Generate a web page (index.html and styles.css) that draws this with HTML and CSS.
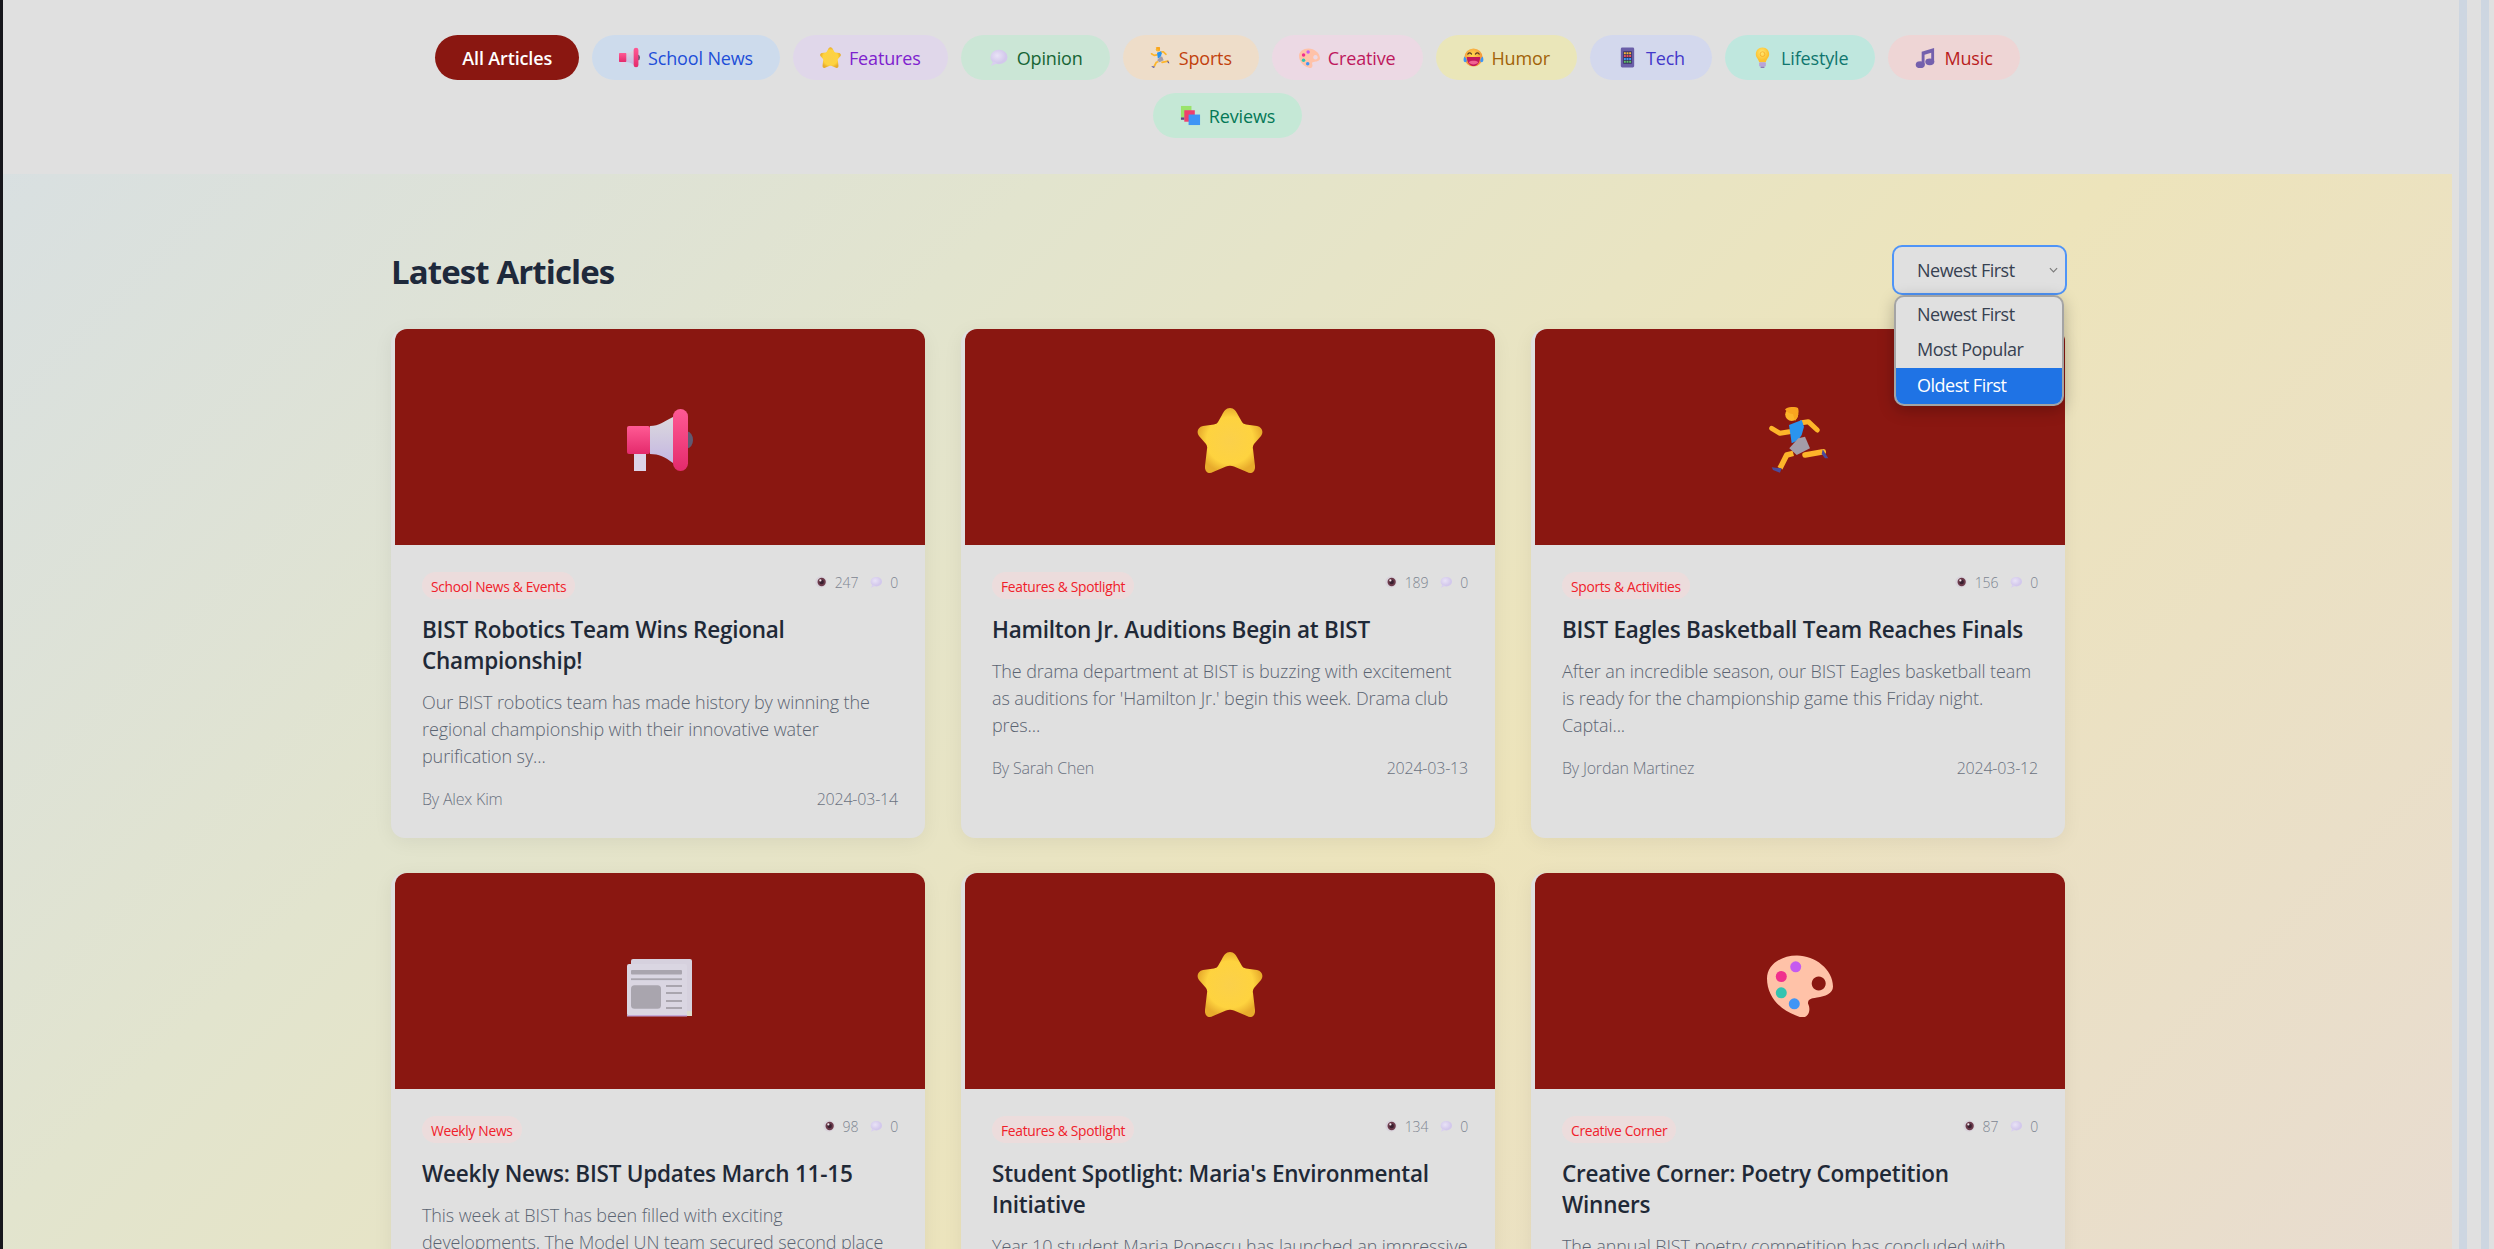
FILE: index.html
```html
<!DOCTYPE html>
<html lang="en">
<head>
    <meta charset="UTF-8">
    <meta name="viewport" content="width=device-width, initial-scale=1.0">
    <title>BIST Articles</title>
    <link rel="stylesheet" href="styles.css">
</head>
<body>
    <svg class="defs" width="0" height="0" aria-hidden="true">
        <defs>
            <linearGradient id="g-pink" x1="0" y1="0" x2="0" y2="1"><stop offset="0" stop-color="#ff5a94"/><stop offset="1" stop-color="#e42a6c"/></linearGradient>
            <linearGradient id="g-horn" x1="0" y1="0" x2="0" y2="1"><stop offset="0" stop-color="#dbd9dd"/><stop offset="1" stop-color="#c4b6e2"/></linearGradient>
            <radialGradient id="g-star"><stop offset="0" stop-color="#fbd04a"/><stop offset=".72" stop-color="#fed33f"/><stop offset="1" stop-color="#e8ac2c"/></radialGradient>
            <radialGradient id="g-bubble" cx=".4" cy=".4"><stop offset="0" stop-color="#e9e3f6"/><stop offset="1" stop-color="#d3c8ec"/></radialGradient>
            <radialGradient id="g-face" cx=".45" cy=".35"><stop offset="0" stop-color="#ffd84f"/><stop offset="1" stop-color="#f59a3a"/></radialGradient>
            <radialGradient id="g-bulb" cx=".45" cy=".35"><stop offset="0" stop-color="#ffe873"/><stop offset="1" stop-color="#fdc12f"/></radialGradient>

            <symbol id="e-mega" viewBox="0 0 66 66">
                <rect x="7" y="45" width="12" height="19" fill="#dcd3e8"/>
                <ellipse cx="60" cy="33" rx="6" ry="8.5" fill="#5f5a72"/>
                <path d="M23 19 C32 19 38 14 46 10 V56 C38 50 32 47 23 47 Z" fill="url(#g-horn)"/>
                <rect x="0" y="19" width="23" height="28" rx="2" fill="url(#g-pink)"/>
                <rect x="46" y="2" width="15" height="62" rx="7.5" fill="url(#g-pink)"/>
            </symbol>
            <symbol id="e-star" viewBox="0 0 66 66">
                <path d="M33 1 C37 1 39 4 41 8 L45 15 C46 16.5 47 17 49 17.5 L60 19 C65 20 67 25 64 29 L57 37 C56 38.5 55.5 40 56 42 L58 59 C58.5 65 54 67.5 50 65 L37 59.5 C34.5 58.5 31.5 58.5 29 59.5 L16 65 C12 67.5 7.5 65 8 59 L10 42 C10.5 40 10 38.5 9 37 L2 29 C-1 25 1 20 6 19 L17 17.5 C19 17 20 16.5 21 15 L25 8 C27 4 29 1 33 1 Z" fill="url(#g-star)"/>
            </symbol>
            <symbol id="e-run" viewBox="0 0 66 66">
                <path d="M22.3 24.7 L13 26.3 L4.7 21.3" fill="none" stroke="#fdb52a" stroke-width="5" stroke-linecap="round" stroke-linejoin="round"/>
                <path d="M34.7 15.7 L41.3 14.7 L50.3 23" fill="none" stroke="#fdb52a" stroke-width="5" stroke-linecap="round" stroke-linejoin="round"/>
                <path d="M26.3 46.3 L19.7 48 L13 61.3" fill="none" stroke="#fdb52a" stroke-width="5.5" stroke-linejoin="round"/>
                <path d="M38 48 L56.3 44.7" fill="none" stroke="#fdb52a" stroke-width="5.5" stroke-linecap="round"/>
                <path d="M22 18 L34.7 13 L37 19.7 L34.7 28 L31.3 33 L24.7 36.3 Z" fill="#2a94ee"/>
                <path d="M22.3 41.3 L31.3 31.3 L38 29.7 L43 41.3 L29.7 48 Z" fill="#a39ca8"/>
                <circle cx="24.7" cy="7.5" r="6.5" fill="#fdb52a"/>
                <path d="M18 2.5 C20 0 27 -1 31 1 C32.5 5 31 11 28 14 L26 7 C23 7 20 5 18 2.5 Z" fill="#f9a51f"/>
                <path d="M55.7 42.3 L61.3 51.3 L58 51.3 L54.7 47 Z" fill="#4b4a9c"/>
                <path d="M4.7 60.3 L14.7 61.3 L13 65.7 L6 63 Z" fill="#4b4a9c"/>
            </symbol>
            <symbol id="e-bubble" viewBox="0 0 44 44">
                <ellipse cx="23" cy="21" rx="18" ry="15" fill="url(#g-bubble)"/>
                <path d="M11 30 L6 40 L20 34 Z" fill="#d9cfef"/>
            </symbol>
            <symbol id="e-palette" viewBox="0 0 66 66">
                <g transform="translate(0 4.5)">
                    <path fill-rule="evenodd" d="M30 0 C48 0 66 14 66 31 C66 38 58 41 50 42 C43 43 41 44 41 48 C43 52 43 57 40 60 C37 63 33 62 29 60 C12 54 0 40 0 23 C0 10 13 0 30 0 Z M51.7 21 a7 7 0 1 0 .01 0 Z" fill="#ffc2a8"/>
                    <circle cx="28.7" cy="11.3" r="5.5" fill="#c55bf0"/>
                    <circle cx="14.3" cy="21" r="5.5" fill="#f0308d"/>
                    <circle cx="14.3" cy="37.3" r="5.5" fill="#33c4b0"/>
                    <circle cx="27.3" cy="48.3" r="5.5" fill="#3f95f5"/>
                </g>
            </symbol>
            <symbol id="e-laugh" viewBox="0 0 44 44">
                <circle cx="22" cy="22" r="19" fill="url(#g-face)"/>
                <path d="M10 15 q4 -5 8 0 M26 15 q4 -5 8 0" fill="none" stroke="#5a3a20" stroke-width="2.5" stroke-linecap="round"/>
                <path d="M8 21 H36 C36 33 29 40 22 40 C15 40 8 33 8 21 Z" fill="#c2185b"/>
                <path d="M12 32 C17 28 27 28 32 32 C29 38 15 38 12 32 Z" fill="#f06292"/>
                <path d="M3 20 C0 26 1 32 5 32 C9 32 9 26 3 20 Z M41 20 C44 26 43 32 39 32 C35 32 35 26 41 20 Z" fill="#3f95f5"/>
            </symbol>
            <symbol id="e-phone" viewBox="0 0 44 44">
                <rect x="8" y="1" width="28" height="42" rx="3" fill="#6a5ea8"/>
                <rect x="13" y="9" width="18" height="26" fill="#38305c"/>
                <path d="M14.5 11 h4v4h-4z M20 11 h4v4h-4z M25.5 11 h4v4h-4z" fill="#f5b83d"/>
                <path d="M14.5 17 h4v4h-4z M20 17 h4v4h-4z M25.5 17 h4v4h-4z" fill="#e8505b"/>
                <path d="M14.5 23 h4v4h-4z M20 23 h4v4h-4z M25.5 23 h4v4h-4z" fill="#3f95f5"/>
                <path d="M14.5 29 h4v4h-4z M20 29 h4v4h-4z M25.5 29 h4v4h-4z" fill="#5dc26a"/>
            </symbol>
            <symbol id="e-bulb" viewBox="0 0 44 44">
                <path d="M22 1 C31 1 36 8 36 15 C36 22 30 25 29 32 H15 C14 25 8 22 8 15 C8 8 13 1 22 1 Z" fill="url(#g-bulb)"/>
                <circle cx="22" cy="15" r="5" fill="none" stroke="#f5a623" stroke-width="1.5"/>
                <rect x="15" y="32" width="14" height="9" rx="2" fill="#b9a3d8"/>
                <rect x="18" y="41" width="8" height="3" fill="#8f78b8"/>
            </symbol>
            <symbol id="e-music" viewBox="0 0 44 44">
                <path d="M14 10 L40 2 V32 H34 V12 L20 16 V38 H14 Z" fill="#7460ad"/>
                <ellipse cx="11" cy="37" rx="9.5" ry="7" fill="#7460ad"/>
                <ellipse cx="31" cy="31" rx="9.5" ry="7" fill="#7460ad"/>
            </symbol>
            <symbol id="e-books" viewBox="0 0 44 44">
                <rect x="2" y="2" width="22" height="24" fill="#9ae36a"/>
                <rect x="9" y="11" width="22" height="24" fill="#ef3f6e"/>
                <rect x="18" y="20" width="24" height="22" fill="#3f95f5"/>
                <rect x="2" y="26" width="7" height="5" fill="#5a4d84"/>
            </symbol>
            <symbol id="e-paper" viewBox="0 0 66 66">
                <g transform="translate(0 6)">
                    <rect x="4" y="2" width="61" height="57" rx="2" fill="#d6d1de"/>
                    <rect x="60" y="54" width="5" height="5" fill="#dcdccb"/>
                    <rect x="0" y="7" width="60" height="52" rx="2" fill="#dad6e2"/>
                    <rect x="0" y="58" width="60" height="1.5" fill="#c2a8d8"/>
                    <rect x="4" y="13" width="51" height="4.5" rx="1" fill="#a9a5ae"/>
                    <rect x="4" y="21.3" width="51" height="1.8" fill="#a9a5ae"/>
                    <rect x="4" y="28.3" width="30" height="23.4" rx="3.5" fill="#a9a5ae"/>
                    <path d="M39 28 H55 V30 H39 Z M39 35 H55 V37 H39 Z M39 43 H55 V45 H39 Z M39 50 H55 V52 H39 Z" fill="#a9a5ae"/>
                </g>
            </symbol>
            <symbol id="e-eye" viewBox="0 0 44 44">
                <circle cx="22" cy="22" r="18" fill="#d9d4dc"/>
                <circle cx="24" cy="22" r="13" fill="#6b3a4a"/>
                <circle cx="24" cy="22" r="7" fill="#3a2030"/>
                <circle cx="20" cy="17" r="3.5" fill="#f0e8ec"/>
            </symbol>
        </defs>
    </svg>

    <div class="edge"></div>

    <div class="page">
        <nav class="topics">
            <a class="pill pill-all">All Articles</a>
            <a class="pill pill-news"><svg class="pill-icon"><use href="#e-mega"/></svg>School News</a>
            <a class="pill pill-features"><svg class="pill-icon"><use href="#e-star"/></svg>Features</a>
            <a class="pill pill-opinion"><svg class="pill-icon"><use href="#e-bubble"/></svg>Opinion</a>
            <a class="pill pill-sports"><svg class="pill-icon"><use href="#e-run"/></svg>Sports</a>
            <a class="pill pill-creative"><svg class="pill-icon"><use href="#e-palette"/></svg>Creative</a>
            <a class="pill pill-humor"><svg class="pill-icon"><use href="#e-laugh"/></svg>Humor</a>
            <a class="pill pill-tech"><svg class="pill-icon"><use href="#e-phone"/></svg>Tech</a>
            <a class="pill pill-lifestyle"><svg class="pill-icon"><use href="#e-bulb"/></svg>Lifestyle</a>
            <a class="pill pill-music"><svg class="pill-icon"><use href="#e-music"/></svg>Music</a>
            <a class="pill pill-reviews"><svg class="pill-icon"><use href="#e-books"/></svg>Reviews</a>
        </nav>

        <main class="content">
            <div class="section-head">
                <h2>Latest Articles</h2>
                <div class="sort">
                    <div class="sort-box">
                        <span>Newest First</span>
                        <svg class="chevron" viewBox="0 0 10 6"><path d="M1 1l4 4 4-4" fill="none" stroke="#7b7b7b" stroke-width="1.3"/></svg>
                    </div>
                    <ul class="sort-menu">
                        <li>Newest First</li>
                        <li>Most Popular</li>
                        <li class="active">Oldest First</li>
                    </ul>
                </div>
            </div>

            <div class="grid">
                <article class="card">
                    <div class="thumb"><svg class="thumb-icon"><use href="#e-mega"/></svg></div>
                    <div class="card-body">
                        <div class="card-top">
                            <span class="tag">School News &amp; Events</span>
                            <span class="stats"><svg><use href="#e-eye"/></svg><span>247</span><svg><use href="#e-bubble"/></svg><span>0</span></span>
                        </div>
                        <h3>BIST Robotics Team Wins Regional Championship!</h3>
                        <p>Our BIST robotics team has made history by winning the regional championship with their innovative water purification sy...</p>
                        <div class="byline"><span>By Alex Kim</span><span>2024-03-14</span></div>
                    </div>
                </article>

                <article class="card">
                    <div class="thumb"><svg class="thumb-icon"><use href="#e-star"/></svg></div>
                    <div class="card-body">
                        <div class="card-top">
                            <span class="tag">Features &amp; Spotlight</span>
                            <span class="stats"><svg><use href="#e-eye"/></svg><span>189</span><svg><use href="#e-bubble"/></svg><span>0</span></span>
                        </div>
                        <h3>Hamilton Jr. Auditions Begin at BIST</h3>
                        <p>The drama department at BIST is buzzing with excitement as auditions for 'Hamilton Jr.' begin this week. Drama club pres...</p>
                        <div class="byline"><span>By Sarah Chen</span><span>2024-03-13</span></div>
                    </div>
                </article>

                <article class="card">
                    <div class="thumb"><svg class="thumb-icon"><use href="#e-run"/></svg></div>
                    <div class="card-body">
                        <div class="card-top">
                            <span class="tag">Sports &amp; Activities</span>
                            <span class="stats"><svg><use href="#e-eye"/></svg><span>156</span><svg><use href="#e-bubble"/></svg><span>0</span></span>
                        </div>
                        <h3>BIST Eagles Basketball Team Reaches Finals</h3>
                        <p>After an incredible season, our BIST Eagles basketball team is ready for the championship game this Friday night. Captai...</p>
                        <div class="byline"><span>By Jordan Martinez</span><span>2024-03-12</span></div>
                    </div>
                </article>

                <article class="card">
                    <div class="thumb"><svg class="thumb-icon"><use href="#e-paper"/></svg></div>
                    <div class="card-body">
                        <div class="card-top">
                            <span class="tag">Weekly News</span>
                            <span class="stats"><svg><use href="#e-eye"/></svg><span>98</span><svg><use href="#e-bubble"/></svg><span>0</span></span>
                        </div>
                        <h3>Weekly News: BIST Updates March 11-15</h3>
                        <p>This week at BIST has been filled with exciting developments. The Model UN team secured second place</p>
                    </div>
                </article>

                <article class="card">
                    <div class="thumb"><svg class="thumb-icon"><use href="#e-star"/></svg></div>
                    <div class="card-body">
                        <div class="card-top">
                            <span class="tag">Features &amp; Spotlight</span>
                            <span class="stats"><svg><use href="#e-eye"/></svg><span>134</span><svg><use href="#e-bubble"/></svg><span>0</span></span>
                        </div>
                        <h3>Student Spotlight: Maria's Environmental Initiative</h3>
                        <p>Year 10 student Maria Popescu has launched an impressive</p>
                    </div>
                </article>

                <article class="card">
                    <div class="thumb"><svg class="thumb-icon"><use href="#e-palette"/></svg></div>
                    <div class="card-body">
                        <div class="card-top">
                            <span class="tag">Creative Corner</span>
                            <span class="stats"><svg><use href="#e-eye"/></svg><span>87</span><svg><use href="#e-bubble"/></svg><span>0</span></span>
                        </div>
                        <h3>Creative Corner: Poetry Competition Winners</h3>
                        <p>The annual BIST poetry competition has concluded with</p>
                    </div>
                </article>
            </div>
        </main>
    </div>

    <div class="rail">
        <div class="rail-bar"></div>
        <div class="rail-bar"></div>
    </div>
</body>
</html>
```

FILE: styles.css
```css
* {
    box-sizing: border-box;
}

body {
    margin: 0;
    height: 100vh;
    overflow: hidden;
    display: flex;
    background-color: #e0e0e0;
    font-family: "Open Sans", "Noto Sans", Arial, sans-serif;
    color: #1f2937;
}

.defs {
    position: absolute;
}

.edge {
    width: 3px;
    flex-shrink: 0;
    background-color: #17171c;
}

.page {
    flex: 1;
    min-width: 0;
    overflow: hidden;
    background: linear-gradient(135deg, #d7dfe4 0%, #e2e4ce 33%, #ede4bb 62%, #e8dcd0 100%);
}

.rail {
    width: 42px;
    flex-shrink: 0;
    display: flex;
    gap: 14px;
    padding-left: 7px;
}

.rail-bar {
    width: 8px;
    background-color: #cdd6e1;
}

/* topic pills */
.topics {
    height: 174px;
    background-color: #e0e0e0;
    padding: 35px 388px 0;
    display: flex;
    flex-wrap: wrap;
    justify-content: center;
    align-content: flex-start;
    gap: 13px;
}

.pill {
    height: 45px;
    padding: 0 27px;
    border-radius: 23px;
    display: flex;
    align-items: center;
    gap: 8px;
    font-size: 18px;
    font-weight: 500;
    letter-spacing: -0.15px;
}

.pill-icon {
    width: 21px;
    height: 21px;
}

.pill-all { background-color: #8a1711; color: #fff; font-weight: 600; }
.pill-news { background-color: #cddbec; color: #1d4ed8; }
.pill-features { background-color: #e0d7ea; color: #7e22ce; }
.pill-opinion { background-color: #cbe6d6; color: #166534; }
.pill-sports { background-color: #eeddc9; color: #c2410c; }
.pill-creative { background-color: #ecd9e4; color: #be185d; }
.pill-humor { background-color: #eae6b9; color: #a16207; }
.pill-tech { background-color: #d3d8ed; color: #4338ca; }
.pill-lifestyle { background-color: #bfe7de; color: #0f766e; }
.pill-music { background-color: #eed5d5; color: #b91c1c; }
.pill-reviews { background-color: #c5e8d6; color: #047857; }

/* main column */
.content {
    margin: 0 387px 0 388px;
    padding-top: 71px;
}

.section-head {
    display: flex;
    justify-content: space-between;
    align-items: center;
    height: 50px;
    margin-bottom: 34px;
}

.section-head h2 {
    margin: 0;
    padding-top: 3px;
    font-size: 33px;
    font-weight: 700;
    letter-spacing: -0.9px;
    color: #1e293b;
}

.sort {
    position: relative;
    width: 175px;
    margin-right: -2px;
}

.sort-box {
    height: 50px;
    padding: 0 7px 0 23px;
    border: 2.5px solid #4f94f7;
    border-radius: 10px;
    background-color: #e0e0e0;
    display: flex;
    align-items: center;
    justify-content: space-between;
    font-size: 18px;
    letter-spacing: -0.5px;
    color: #374151;
}

.chevron {
    width: 9px;
    height: 6px;
}

.sort-menu {
    position: absolute;
    z-index: 5;
    top: 50px;
    left: 2px;
    width: 170px;
    margin: 0;
    padding: 0;
    list-style: none;
    overflow: hidden;
    background-color: #e0e0e0;
    border: 2px solid rgba(90, 90, 90, 0.45);
    border-radius: 10px;
    box-shadow: 0 4px 16px rgba(0, 0, 0, 0.25);
    font-size: 18px;
    letter-spacing: -0.5px;
    color: #374151;
}

.sort-menu li {
    height: 35.5px;
    padding: 0 0 2px 21px;
    display: flex;
    align-items: center;
}

.sort-menu li.active {
    background-color: #1f73e5;
    color: #fff;
}

.grid {
    display: grid;
    grid-template-columns: repeat(3, 1fr);
    gap: 35.5px 36px;
}

.card {
    background-color: #e0e0e0;
    border-radius: 14px;
    box-shadow: 0 4px 20px rgba(0, 0, 0, 0.06);
}

.thumb {
    height: 216px;
    margin-left: 4px;
    padding-top: 6px;
    border-radius: 12px 12px 0 0;
    background-color: #8a1711;
    display: flex;
    align-items: center;
    justify-content: center;
}

.thumb-icon {
    width: 66px;
    height: 66px;
}

.card-body {
    padding: 27px 27px 27px 31px;
}

.card-top {
    display: flex;
    justify-content: space-between;
    align-items: flex-start;
    margin-bottom: 14.5px;
}

.tag {
    height: 27px;
    padding: 2px 9px 0;
    border-radius: 14px;
    background-color: #ecdcdc;
    color: #f0202a;
    font-size: 13.8px;
    letter-spacing: -0.3px;
    display: flex;
    align-items: center;
}

.stats {
    display: flex;
    align-items: center;
    height: 20px;
    font-size: 14px;
    font-weight: 300;
    letter-spacing: -0.2px;
    color: #7d8591;
}

.stats svg {
    width: 14px;
    height: 14px;
    margin-right: 7px;
}

.stats span + svg {
    margin-left: 11px;
}

.card h3 {
    margin: 0 0 13px;
    font-size: 22.5px;
    line-height: 31px;
    font-weight: 600;
    letter-spacing: -0.22px;
    color: #1f2937;
}

.card p {
    margin: 0 0 17px;
    font-size: 18px;
    line-height: 27px;
    font-weight: 300;
    letter-spacing: -0.1px;
    color: #5b6472;
}

.byline {
    display: flex;
    justify-content: space-between;
    font-size: 16px;
    line-height: 24px;
    font-weight: 300;
    letter-spacing: -0.2px;
    color: #6b7280;
}
```
